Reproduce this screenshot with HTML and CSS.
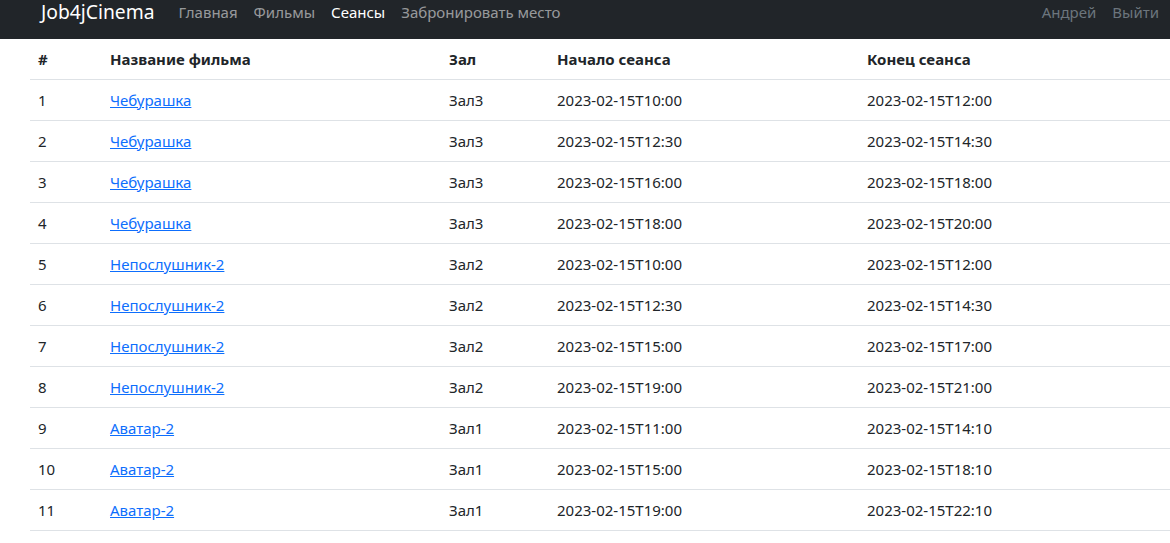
FILE: index.html
```html
<!DOCTYPE html>
<html lang="ru">
<head>
<meta charset="utf-8">
<title>Job4jCinema</title>
<link rel="stylesheet" href="styles.css">
</head>
<body>
<nav class="navbar">
  <div class="nav-inner">
    <a class="brand" href="#">Job4jCinema</a>
    <div class="nav-main">
      <a class="nav-link" href="#">Главная</a>
      <a class="nav-link" href="#">Фильмы</a>
      <a class="nav-link active" href="#">Сеансы</a>
      <a class="nav-link" href="#">Забронировать место</a>
    </div>
    <div class="nav-user">
      <a class="nav-link muted" href="#">Андрей</a>
      <a class="nav-link muted" href="#">Выйти</a>
    </div>
  </div>
</nav>
<main class="container">
  <table class="table">
    <thead>
      <tr><th class="c-num">#</th><th class="c-title">Название фильма</th><th class="c-hall">Зал</th><th class="c-start">Начало сеанса</th><th>Конец сеанса</th></tr>
    </thead>
    <tbody>
      <tr><td>1</td><td><a href="#">Чебурашка</a></td><td>Зал3</td><td>2023-02-15T10:00</td><td>2023-02-15T12:00</td></tr>
      <tr><td>2</td><td><a href="#">Чебурашка</a></td><td>Зал3</td><td>2023-02-15T12:30</td><td>2023-02-15T14:30</td></tr>
      <tr><td>3</td><td><a href="#">Чебурашка</a></td><td>Зал3</td><td>2023-02-15T16:00</td><td>2023-02-15T18:00</td></tr>
      <tr><td>4</td><td><a href="#">Чебурашка</a></td><td>Зал3</td><td>2023-02-15T18:00</td><td>2023-02-15T20:00</td></tr>
      <tr><td>5</td><td><a href="#">Непослушник-2</a></td><td>Зал2</td><td>2023-02-15T10:00</td><td>2023-02-15T12:00</td></tr>
      <tr><td>6</td><td><a href="#">Непослушник-2</a></td><td>Зал2</td><td>2023-02-15T12:30</td><td>2023-02-15T14:30</td></tr>
      <tr><td>7</td><td><a href="#">Непослушник-2</a></td><td>Зал2</td><td>2023-02-15T15:00</td><td>2023-02-15T17:00</td></tr>
      <tr><td>8</td><td><a href="#">Непослушник-2</a></td><td>Зал2</td><td>2023-02-15T19:00</td><td>2023-02-15T21:00</td></tr>
      <tr><td>9</td><td><a href="#">Аватар-2</a></td><td>Зал1</td><td>2023-02-15T11:00</td><td>2023-02-15T14:10</td></tr>
      <tr><td>10</td><td><a href="#">Аватар-2</a></td><td>Зал1</td><td>2023-02-15T15:00</td><td>2023-02-15T18:10</td></tr>
      <tr><td>11</td><td><a href="#">Аватар-2</a></td><td>Зал1</td><td>2023-02-15T19:00</td><td>2023-02-15T22:10</td></tr>
    </tbody>
  </table>
</main>
</body>
</html>
```
FILE: styles.css
```css
* { box-sizing: border-box; }
html, body { margin: 0; padding: 0; }
body {
  font-family: "Noto Sans", "Open Sans", sans-serif;
  font-size: 15px;
  line-height: 24px;
  color: #212529;
  background: #fff;
  overflow: hidden;
}
a { color: #0d6efd; }
.navbar {
  background: #212529;
  height: 39px;
}
.nav-inner {
  display: flex;
  align-items: center;
  height: 39px;
  padding: 0 3px 15px 41px;
}
.brand {
  color: #fff;
  text-decoration: none;
  font-size: 19.3px;
  margin-right: 16px;
}
.nav-main { display: flex; }
.nav-user { display: flex; margin-left: auto; }
.nav-link {
  color: rgba(255, 255, 255, 0.55);
  text-decoration: none;
  padding: 0 8px;
}
.nav-link.active { color: #fff; }
.nav-link.muted { color: #6c757d; }
.container {
  padding-left: 30px;
}
.table {
  width: 1140px;
  border-collapse: collapse;
}
.table th, .table td {
  text-align: left;
  padding: 8px;
  height: 41px;
  border-bottom: 1px solid #dee2e6;
  vertical-align: middle;
}
.table th { font-weight: 700; height: 40px; }
.c-num { width: 72px; }
.c-title { width: 339px; }
.c-hall { width: 108px; }
.c-start { width: 310px; }
```
